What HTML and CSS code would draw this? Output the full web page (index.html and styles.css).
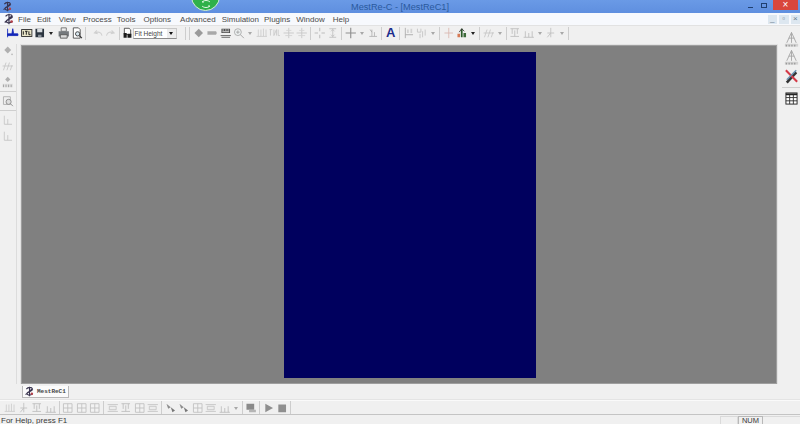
FILE: index.html
```html
<!DOCTYPE html>
<html lang="en">
<head>
<meta charset="utf-8">
<title>MestRe-C - [MestReC1]</title>
<link rel="stylesheet" href="styles.css">
</head>
<body>
<svg class="defs" width="0" height="0" aria-hidden="true">
  <defs>
    <symbol id="logo" viewBox="0 0 14 14"><path d="M3 4c2-3 7-3 8 0M11 4c0 3-6 3-7 5-1 2 3 4 7 1M7 1v12M2 11l9-8" fill="none" stroke="#3a3550" stroke-width="1.4"/><circle cx="10" cy="10" r="1.6" fill="#b3404a"/></symbol>
    <symbol id="peak" viewBox="0 0 14 14"><path d="M1 2v10M1 8h5l1-6 1 6h5v2H1z" fill="#1226b8" stroke="#1226b8"/></symbol>
    <symbol id="itr" viewBox="0 0 14 14"><rect x="1" y="3" width="12" height="8" fill="#e9e5c8" stroke="#222"/><path d="M3 5v4M5 5h3M6.500 5v4M9.500 5v4h2" stroke="#111" fill="none" stroke-width="1.100"/></symbol>
    <symbol id="save" viewBox="0 0 14 14"><path d="M2 2h10v10H2z" fill="#2c3540"/><path d="M4 2h6v4H4z" fill="#d9dde0"/><path d="M5 9h4v3H5z" fill="#8a929a"/></symbol>
    <symbol id="print" viewBox="0 0 14 14"><path d="M4 1h6v4H4z" fill="#eee" stroke="#666"/><path d="M1 5h12v6H1z" fill="#75797d"/><path d="M3 9h8v4H3z" fill="#dcdcdc" stroke="#555"/></symbol>
    <symbol id="prev" viewBox="0 0 14 14"><path d="M3 1h6l2 2v10H3z" fill="#fff" stroke="#444"/><circle cx="8" cy="8" r="2.500" fill="#d8e6ee" stroke="#333"/><path d="M10 10l3 3" stroke="#333" stroke-width="1.400"/></symbol>
    <symbol id="undo" viewBox="0 0 14 14"><path d="M12 10c-1-4-5-5-8-3M6 4L3 7l4 1" fill="none" stroke="#d0d0d0" stroke-width="1.200"/></symbol>
    <symbol id="redo" viewBox="0 0 14 14"><path d="M2 10c1-4 5-5 8-3M8 4l3 3-4 1" fill="none" stroke="#d0d0d0" stroke-width="1.200"/></symbol>
    <symbol id="fit" viewBox="0 0 14 14"><path d="M3 1h6l2 2v6H3z" fill="#fff" stroke="#333"/><path d="M2 7h4v6H2zM7 8h5v5H7z" fill="#1c1c1c"/></symbol>
    <symbol id="dia" viewBox="0 0 14 14"><path d="M7 2l5 5-5 5-5-5z" fill="#9a9a9a"/></symbol>
    <symbol id="minus" viewBox="0 0 14 14"><path d="M2 5h10l1 2-1 2H2z" fill="#a8a8a8"/></symbol>
    <symbol id="grid" viewBox="0 0 14 14"><path d="M2 2h10v5H2z" fill="#444"/><path d="M3 3h2v1H3zM6 3h2v1H6zM9 3h2v1H9zM3 5h8v1H3z" fill="#ddd"/><path d="M1 10h12M2 12h10" stroke="#555"/></symbol>
    <symbol id="zoom" viewBox="0 0 14 14"><circle cx="6" cy="6" r="4" fill="#eef2f2" stroke="#a6a6a6"/><path d="M9 9l4 4M4 6h4M6 4v4" stroke="#a6a6a6" stroke-width="1.100"/></symbol>
    <symbol id="fa" viewBox="0 0 14 14"><path d="M3 3v8M6 3v8M9 2v9M12 3v8M1 11h12" stroke="#cccccc" fill="none"/></symbol>
    <symbol id="fb" viewBox="0 0 14 14"><path d="M1 3h3M2 3v7M6 3v7l3-7v7M11 3v7h2" stroke="#c8c8c8" fill="none"/></symbol>
    <symbol id="cross" viewBox="0 0 14 14"><path d="M7 1v12M1 7h12" stroke="#c6c6c6"/><path d="M4 4h6M3 10h8" stroke="#d4d4d4"/></symbol>
    <symbol id="target" viewBox="0 0 14 14"><path d="M7 1v4M7 9v4M1 7h4M9 7h4" stroke="#bcbcbc" stroke-width="1.200"/></symbol>
    <symbol id="ibeam" viewBox="0 0 14 14"><path d="M3 2h8M3 12h8M7 2v10M5 5l2-2 2 2M5 9l2 2 2-2" stroke="#c0c0c0" fill="none"/></symbol>
    <symbol id="plus" viewBox="0 0 14 14"><path d="M7 1v12M1 7h12" stroke="#8e8e8e" stroke-width="1.300"/></symbol>
    <symbol id="tick" viewBox="0 0 14 14"><path d="M3 11h9M6 3v8M9 6v5" stroke="#b2b2b2" fill="none"/><path d="M4 3l2 3" stroke="#a8a8a8"/></symbol>
    <symbol id="flag" viewBox="0 0 14 14"><path d="M3 1v12M3 9h9" stroke="#a8a8a8" fill="none"/><path d="M5 3h2v4H5zM9 2h2v5H9z" fill="#d2d2d2"/></symbol>
    <symbol id="fork" viewBox="0 0 14 14"><path d="M2 2v4h4V2M8 5v7M11 3v7M5 8v5" stroke="#c2c2c2" fill="none"/></symbol>
    <symbol id="red" viewBox="0 0 14 14"><path d="M7 1v12M2 7h10" stroke="#d9b6b0"/></symbol>
    <symbol id="color" viewBox="0 0 14 14"><path d="M2 12V8h3v4z" fill="#d77a55"/><path d="M6 12V2h2v10z" fill="#2a5a2a"/><path d="M9 12V7h3v5z" fill="#3d6b3a"/><path d="M4 6l3-4 3 3" fill="none" stroke="#333"/></symbol>
    <symbol id="wave" viewBox="0 0 14 14"><path d="M2 12l3-9M6 12l3-9M10 12l2-6M1 7h12" stroke="#c6c6c6" fill="none"/></symbol>
    <symbol id="cols" viewBox="0 0 14 14"><path d="M2 2h10M4 2v6M10 2v6M7 4v7M2 11h10" stroke="#bcbcbc" fill="none"/></symbol>
    <symbol id="lines" viewBox="0 0 14 14"><path d="M1 12h12M3 5v7M7 7v5M11 5v7" stroke="#bcbcbc" fill="none"/></symbol>
    <symbol id="lam" viewBox="0 0 14 14"><path d="M7 1v11M3 7h8M3 12l4-5" stroke="#c0c0c0" fill="none"/></symbol>
    <symbol id="box" viewBox="0 0 14 14"><path d="M2 2h10v10H2zM2 7h10M7 2v10" fill="#f2f2f2" stroke="#c0c0c0"/></symbol>
    <symbol id="bars" viewBox="0 0 14 14"><path d="M1 3h12M1 11h12M3 5h8v4H3z" fill="#ececec" stroke="#c4c4c4"/></symbol>
    <symbol id="dbl" viewBox="0 0 14 14"><path d="M2 2l5 4-3 2z" fill="#8c8c8c"/><path d="M7 6l5 4-3 2z" fill="#777"/></symbol>
    <symbol id="play" viewBox="0 0 14 14"><path d="M3 2l9 5-9 5z" fill="#8f8f8f"/></symbol>
    <symbol id="stop" viewBox="0 0 14 14"><path d="M3 3h9v9H3z" fill="#8f8f8f"/></symbol>
    <symbol id="mark" viewBox="0 0 14 14"><path d="M2 2h9v7H2z" fill="#8a8a8a"/><path d="M5 9h8v3H5z" fill="#b5b5b5"/></symbol>
    <symbol id="tree" viewBox="0 0 18 18"><path d="M9 1L4 12M9 1l5 11M9 1v11M6 7h6" stroke="#a8a8a8" fill="none"/><path d="M2 13h14v3H2z" fill="#d2d2d2"/><path d="M3 14h1v2H3zM6 14h1v2H6zM9 14h1v2H9zM12 14h1v2h-1z" fill="#888"/></symbol>
    <symbol id="tools" viewBox="0 0 18 18"><path d="M3 15L13 4l2 2L5 17z" fill="#333"/><path d="M3 3l12 12" stroke="#d43a48" stroke-width="2.200"/><path d="M14 3L4 13" stroke="#6a92b0" stroke-width="1.600"/></symbol>
    <symbol id="table" viewBox="0 0 14 14"><rect x="1" y="1" width="12" height="12" fill="#fff" stroke="#222"/><path d="M1 2.500h12" stroke="#222" stroke-width="2"/><path d="M1 6h12M1 9.500h12M5 3v10M9 3v10" stroke="#333"/></symbol>
    <symbol id="lsolid" viewBox="0 0 14 14"><path d="M7 3l4 4-4 4-4-4z" fill="#b0b0b0"/><circle cx="12" cy="12" r="1" fill="#b8b8b8"/></symbol>
    <symbol id="lpic" viewBox="0 0 14 14"><path d="M2 2h8v9H2z" fill="#eee" stroke="#aaa"/><circle cx="8" cy="8" r="3" fill="#ddd" stroke="#888"/><path d="M10 10l3 3" stroke="#888"/></symbol>
    <symbol id="lnum" viewBox="0 0 14 14"><path d="M7 1l3 3-3 3-3-3z" fill="#b0b0b0"/><path d="M1 9h12v4H1z" fill="#e0e0e0"/><path d="M2 10v3M5 10v3M8 10v3M11 10v3" stroke="#999"/></symbol>
    <symbol id="lax" viewBox="0 0 14 14"><path d="M3 2v10h9M7 6v6" stroke="#c4c4c4" fill="none"/></symbol>
  </defs>
</svg>

<div class="app">
  <header class="title">
    <svg class="title-logo"><use href="#logo"/></svg>
    <span class="title-text">MestRe-C - [MestReC1]</span>
    <div class="win">
      <span class="win-btn"><i class="w-min"></i></span>
      <span class="win-btn"><i class="w-max"></i></span>
      <span class="win-close">×</span>
    </div>
  </header>

  <nav class="menu">
    <svg class="menu-logo"><use href="#logo"/></svg>
    <span class="m m-file">File</span>
    <span class="m m-edit">Edit</span>
    <span class="m m-view">View</span>
    <span class="m m-proc">Process</span>
    <span class="m m-tools">Tools</span>
    <span class="m m-opt">Options</span>
    <span class="m m-adv">Advanced</span>
    <span class="m m-sim">Simulation</span>
    <span class="m m-plug">Plugins</span>
    <span class="m m-win">Window</span>
    <span class="m">Help</span>
    <div class="mdi">
      <span class="mdi-btn">_</span>
      <span class="mdi-btn">▫</span>
      <span class="mdi-btn">×</span>
    </div>
  </nav>

  <div class="bar bar-top">
    <svg class="ic"><use href="#peak"/></svg>
    <svg class="ic"><use href="#itr"/></svg>
    <svg class="ic"><use href="#save"/></svg>
    <i class="ar dark"></i>
    <svg class="ic ic-gap"><use href="#print"/></svg>
    <svg class="ic"><use href="#prev"/></svg>
    <i class="sep sep-lg"></i>
    <svg class="ic"><use href="#undo"/></svg>
    <svg class="ic"><use href="#redo"/></svg>
    <i class="sep"></i>
    <svg class="ic ic-fit"><use href="#fit"/></svg>
    <span class="combo"><span class="combo-text">Fit Height</span><span class="combo-btn"></span></span>
    <i class="sep sep-wide"></i>
    <i class="sep"></i>
    <svg class="ic"><use href="#dia"/></svg>
    <svg class="ic"><use href="#minus"/></svg>
    <svg class="ic"><use href="#grid"/></svg>
    <svg class="ic"><use href="#zoom"/></svg>
    <i class="ar"></i>
    <svg class="ic"><use href="#fa"/></svg>
    <svg class="ic"><use href="#fb"/></svg>
    <svg class="ic"><use href="#cross"/></svg>
    <svg class="ic"><use href="#cross"/></svg>
    <i class="sep"></i>
    <svg class="ic"><use href="#target"/></svg>
    <svg class="ic"><use href="#ibeam"/></svg>
    <i class="sep"></i>
    <svg class="ic"><use href="#plus"/></svg>
    <i class="ar"></i>
    <svg class="ic"><use href="#tick"/></svg>
    <i class="sep"></i>
    <span class="big-a">A</span>
    <i class="sep"></i>
    <svg class="ic"><use href="#flag"/></svg>
    <svg class="ic"><use href="#fork"/></svg>
    <i class="ar"></i>
    <i class="sep"></i>
    <svg class="ic"><use href="#red"/></svg>
    <svg class="ic"><use href="#color"/></svg>
    <i class="ar dark"></i>
    <i class="sep"></i>
    <svg class="ic"><use href="#wave"/></svg>
    <i class="ar"></i>
    <i class="sep"></i>
    <svg class="ic"><use href="#cols"/></svg>
    <svg class="ic"><use href="#lines"/></svg>
    <i class="ar"></i>
    <svg class="ic"><use href="#lam"/></svg>
    <i class="ar"></i>
    <i class="sep"></i>
  </div>

  <div class="workspace">
    <aside class="side-l">
      <svg class="ic"><use href="#lsolid"/></svg>
      <svg class="ic"><use href="#wave"/></svg>
      <svg class="ic"><use href="#lnum"/></svg>
      <i class="hsep"></i>
      <svg class="ic"><use href="#lpic"/></svg>
      <i class="hsep"></i>
      <svg class="ic"><use href="#lax"/></svg>
      <svg class="ic"><use href="#lax"/></svg>
    </aside>
    <main class="canvas">
      <div class="page"></div>
    </main>
    <aside class="side-r">
      <svg class="ic-r"><use href="#tree"/></svg>
      <svg class="ic-r"><use href="#tree"/></svg>
      <svg class="ic-r"><use href="#tools"/></svg>
      <i class="hsep hsep-r"></i>
      <svg class="ic-t"><use href="#table"/></svg>
    </aside>
  </div>

  <div class="tabs">
    <span class="tab"><svg class="tab-logo"><use href="#logo"/></svg>MestReC1</span>
  </div>

  <div class="bar bar-bot">
    <svg class="ic"><use href="#fa"/></svg>
    <svg class="ic"><use href="#lam"/></svg>
    <svg class="ic"><use href="#cols"/></svg>
    <svg class="ic"><use href="#lines"/></svg>
    <i class="sep"></i>
    <svg class="ic"><use href="#box"/></svg>
    <svg class="ic"><use href="#box"/></svg>
    <svg class="ic"><use href="#box"/></svg>
    <i class="sep"></i>
    <svg class="ic"><use href="#bars"/></svg>
    <svg class="ic"><use href="#cols"/></svg>
    <svg class="ic"><use href="#box"/></svg>
    <svg class="ic"><use href="#bars"/></svg>
    <i class="sep"></i>
    <svg class="ic"><use href="#dbl"/></svg>
    <svg class="ic"><use href="#dbl"/></svg>
    <svg class="ic"><use href="#box"/></svg>
    <svg class="ic"><use href="#bars"/></svg>
    <svg class="ic"><use href="#lines"/></svg>
    <i class="ar"></i>
    <i class="sep"></i>
    <svg class="ic"><use href="#mark"/></svg>
    <i class="sep"></i>
    <svg class="ic"><use href="#play"/></svg>
    <svg class="ic"><use href="#stop"/></svg>
    <i class="sep"></i>
  </div>

  <footer class="status">
    <span class="status-msg">For Help, press F1</span>
    <span class="pane pane-a"></span>
    <span class="pane pane-num">NUM</span>
    <span class="pane pane-c"></span>
  </footer>

  <div class="badge"><svg class="badge-ic" viewBox="0 0 12 8"><path d="M2 2c2-2 6-2 8 0M10 6C8 8 4 8 2 6M2 2h2M10 6H8" fill="none" stroke="#dff5e2" stroke-width="1"/></svg></div>
</div>
</body>
</html>
```

FILE: styles.css
```css
* { box-sizing: border-box; }
html, body { margin: 0; padding: 0; }
body { width: 800px; height: 424px; overflow: hidden; background: #f0f0f0; font-family: "Liberation Sans", Arial, sans-serif; }
.defs { position: absolute; }
.app { position: relative; width: 800px; height: 424px; overflow: hidden; display: flex; flex-direction: column; background: #f0f0f0; }

.title { height: 13px; flex: none; display: flex; align-items: center; position: relative; background: linear-gradient(#6a9ae6, #5f8fdf); }
.title-logo { width: 11px; height: 11px; margin-left: 2px; filter: blur(.3px); }
.title-text { position: absolute; left: 351px; top: 1px; font-size: 9.2px; line-height: 13px; color: #2a5a9e; white-space: nowrap; }
.win { margin-left: auto; display: flex; align-self: flex-start; margin-right: 2px; }
.win-btn { width: 14px; height: 10px; display: flex; align-items: center; justify-content: center; }
.w-min { width: 5px; height: 1px; background: #1f3f70; margin-top: 5px; }
.w-max { width: 6px; height: 5px; border: 1px solid #1f3f70; }
.win-close { width: 25px; height: 10px; margin-left: 2px; background: #d9463c; color: #fff; font-size: 10px; line-height: 10px; text-align: center; }

.menu { height: 12px; flex: none; display: flex; align-items: center; background: #f7f9fd; font-size: 8px; color: #4a4a4a; white-space: nowrap; }
.menu-logo { width: 12px; height: 12px; margin: 0 3px 0 3px; filter: blur(.3px); }
.m-file { margin-right: 6px; }
.m-edit { margin-right: 8px; }
.m-view { margin-right: 7px; }
.m-proc { margin-right: 5px; }
.m-tools { margin-right: 8px; }
.m-opt { margin-right: 9px; }
.m-adv { margin-right: 6px; }
.m-sim { margin-right: 5px; }
.m-plug { margin-right: 6px; }
.m-win { margin-right: 8px; }
.mdi { margin-left: auto; display: flex; gap: 2px; }
.mdi-btn { width: 9.5px; height: 9px; background: #dde7f0; color: #6a7c8e; font-size: 8px; line-height: 8px; text-align: center; }

.bar { flex: none; display: flex; align-items: center; background: #f0f0f0; }
.bar-top { height: 15px; padding-left: 6px; border-top: 1px solid #e2e2e2; }
.bar-bot { height: 14px; padding-left: 3px; border-top: 1px solid #fafafa; }
.ic { width: 13.5px; height: 12px; flex: none; filter: blur(.35px); }
.ic-gap { margin-left: 1px; }
.ic-fit { width: 11px; }
.ar { width: 9px; height: 12px; flex: none; position: relative; }
.ar::after { content: ""; position: absolute; left: 2.500px; top: 5px; border: 2px solid transparent; border-top: 3px solid #a8a8a8; border-bottom: 0; }
.ar.dark::after { border-top-color: #222; }
.sep { width: 4px; height: 13px; flex: none; position: relative; }
.sep::after { content: ""; position: absolute; left: 1.500px; top: 0; width: 1px; height: 13px; background: #cdcdcd; }
.sep-lg { width: 7px; }
.sep-wide { margin-left: 7.250px; }
.combo { width: 44px; height: 11px; flex: none; display: flex; align-items: center; background: #fff; border: 1px solid #c8c8c8; border-bottom-color: #8c8c8c; }
.combo-text { flex: 1; font-size: 6.500px; line-height: 9px; padding-left: 1px; color: #444; white-space: nowrap; }
.combo-btn { width: 9px; height: 9px; position: relative; background: #ececec; }
.combo-btn::after { content: ""; position: absolute; left: 2px; top: 3px; border: 2.500px solid transparent; border-top: 3px solid #111; border-bottom: 0; }
.big-a { width: 14px; flex: none; font-weight: bold; font-size: 13px; line-height: 14px; text-align: center; color: #1c2c8c; }

.workspace { flex: 1; min-height: 0; display: flex; padding-top: 5px; background: #f0f0f0; }
.side-l { width: 17px; flex: none; margin-top: -1px; display: flex; flex-direction: column; align-items: center; gap: 4px; border-right: 1px solid #dcdcdc; }
.side-r { width: 22px; flex: none; margin: -14px 0 0 1px; padding-left: 4px; display: flex; flex-direction: column; align-items: center; }
.ic-r { width: 17px; height: 18px; flex: none; filter: blur(.35px); }
.ic-t { width: 13px; height: 13px; flex: none; filter: blur(.25px); }
.hsep { width: 100%; height: 1px; flex: none; margin: -1px 0; background: #cfcfcf; }
.hsep-r { margin: 2px 0 4px; }
.canvas { flex: 1; min-width: 0; margin-left: 4px; display: flex; justify-content: center; padding-top: 6px; background: #808080; border: 1px solid #9e9e9e; outline: 1px solid #e2e2e2; }
.page { width: 252px; height: 326px; background: #00005e; margin-left: 22px; }

.tabs { height: 16px; flex: none; padding: 2px 0 0 22px; background: #f0f0f0; border-bottom: 1px solid #e4e4e4; }
.tab { width: 47px; height: 12px; display: flex; align-items: center; gap: 2px; padding-left: 1px; background: #fbfbfb; border: 1px solid #b9b9b9; border-top: 0; font-family: "Liberation Mono", monospace; font-weight: bold; font-size: 6px; color: #444; white-space: nowrap; }
.tab-logo { width: 11px; height: 11px; flex: none; filter: blur(.3px); }

.status { height: 10px; flex: none; display: flex; align-items: flex-start; border-top: 1px solid #c4c4c4; font-size: 8px; line-height: 9px; color: #3a3a3a; background: #f0f0f0; overflow: hidden; }
.status-msg { padding: 1px 0 0 1px; margin-right: auto; white-space: nowrap; }
.pane { height: 9px; margin-top: 1px; border: 1px solid #dadada; border-bottom: 0; text-align: center; line-height: 8px; font-size: 7.500px; }
.pane-a { width: 18px; }
.pane-num { width: 25px; border-color: #b8b8b8; }
.pane-c { width: 37px; border-left: 0; border-right: 0; }

.badge { position: absolute; left: 191px; top: -18px; width: 29px; height: 29px; border-radius: 50%; background: #2fb14a; border: 1px solid #d6f0da; display: flex; align-items: flex-end; justify-content: center; padding-bottom: 2px; }
.badge-ic { width: 12px; height: 8px; }
```
